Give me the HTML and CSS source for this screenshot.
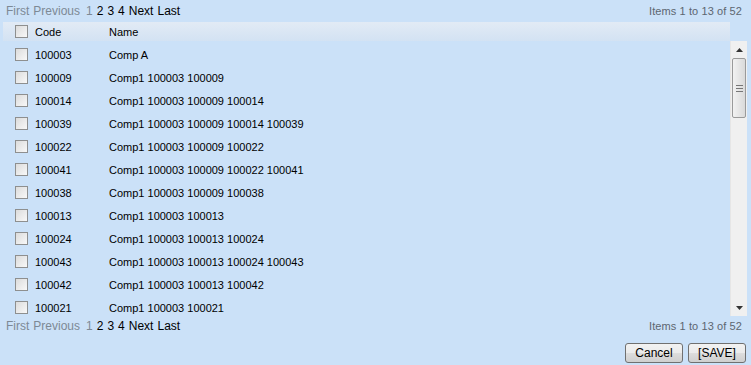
FILE: index.html
```html
<!DOCTYPE html>
<html>
<head>
    <link rel="stylesheet" href="styles.css">
</head>
<body>
    <div class="panel">
        <div class="pager">
            <div class="pager-links">
                <span class="off">First</span>
                <span class="off">Previous</span>
                <span class="off first-num">1</span>
                <a href="#">2</a>
                <a href="#">3</a>
                <a href="#">4</a>
                <a href="#">Next</a>
                <a href="#">Last</a>
            </div>
            <div class="pager-info">Items 1 to 13 of 52</div>
        </div>

        <div class="grid">
            <div class="grid-head">
                <span class="cell-check"><span class="box"></span></span>
                <span class="cell-code">Code</span>
                <span class="cell-name">Name</span>
            </div>
            <div class="grid-body">
                <div class="rows">
                    <div class="row"><span class="cell-check"><span class="box"></span></span><span class="cell-code">100003</span><span class="cell-name">Comp A</span></div>
                    <div class="row"><span class="cell-check"><span class="box"></span></span><span class="cell-code">100009</span><span class="cell-name">Comp1 100003 100009</span></div>
                    <div class="row"><span class="cell-check"><span class="box"></span></span><span class="cell-code">100014</span><span class="cell-name">Comp1 100003 100009 100014</span></div>
                    <div class="row"><span class="cell-check"><span class="box"></span></span><span class="cell-code">100039</span><span class="cell-name">Comp1 100003 100009 100014 100039</span></div>
                    <div class="row"><span class="cell-check"><span class="box"></span></span><span class="cell-code">100022</span><span class="cell-name">Comp1 100003 100009 100022</span></div>
                    <div class="row"><span class="cell-check"><span class="box"></span></span><span class="cell-code">100041</span><span class="cell-name">Comp1 100003 100009 100022 100041</span></div>
                    <div class="row"><span class="cell-check"><span class="box"></span></span><span class="cell-code">100038</span><span class="cell-name">Comp1 100003 100009 100038</span></div>
                    <div class="row"><span class="cell-check"><span class="box"></span></span><span class="cell-code">100013</span><span class="cell-name">Comp1 100003 100013</span></div>
                    <div class="row"><span class="cell-check"><span class="box"></span></span><span class="cell-code">100024</span><span class="cell-name">Comp1 100003 100013 100024</span></div>
                    <div class="row"><span class="cell-check"><span class="box"></span></span><span class="cell-code">100043</span><span class="cell-name">Comp1 100003 100013 100024 100043</span></div>
                    <div class="row"><span class="cell-check"><span class="box"></span></span><span class="cell-code">100042</span><span class="cell-name">Comp1 100003 100013 100042</span></div>
                    <div class="row"><span class="cell-check"><span class="box"></span></span><span class="cell-code">100021</span><span class="cell-name">Comp1 100003 100021</span></div>
                </div>
                <div class="scrollbar">
                    <div class="arrow">
                        <svg width="7" height="4" viewBox="0 0 7 4"><path d="M3.5 0 L7 4 L0 4 Z" fill="#333"/></svg>
                    </div>
                    <div class="thumb">
                        <svg width="7" height="7" viewBox="0 0 7 7"><path d="M0 0.5 H7 M0 3.5 H7 M0 6.5 H7" stroke="#777" stroke-width="1"/></svg>
                    </div>
                    <div class="track"></div>
                    <div class="arrow">
                        <svg width="7" height="4" viewBox="0 0 7 4"><path d="M0 0 L7 0 L3.5 4 Z" fill="#333"/></svg>
                    </div>
                </div>
            </div>
        </div>

        <div class="pager pager-bottom">
            <div class="pager-links">
                <span class="off">First</span>
                <span class="off">Previous</span>
                <span class="off first-num">1</span>
                <a href="#">2</a>
                <a href="#">3</a>
                <a href="#">4</a>
                <a href="#">Next</a>
                <a href="#">Last</a>
            </div>
            <div class="pager-info">Items 1 to 13 of 52</div>
        </div>

        <div class="actions">
            <button class="btn">Cancel</button>
            <button class="btn">[SAVE]</button>
        </div>
    </div>
</body>
</html>
```

FILE: styles.css
```css
/* General Styles */
body {
    margin: 0;
    padding: 0;
    background-color: #cbe1f8;
    font-family: 'Liberation Sans', Arial, sans-serif;
    font-size: 11px;
    color: #000;
}

.panel {
    width: 751px;
    height: 365px;
    box-sizing: border-box;
    padding: 0 4px 0 3px;
}

/* Pager */
.pager {
    display: flex;
    justify-content: space-between;
    align-items: center;
    height: 22px;
    padding: 0 5px 0 3px;
    font-size: 12px;
}

.pager-links {
    display: flex;
    gap: 4px;
}

.pager-links .first-num {
    margin-left: 2px;
}

.pager-links a {
    color: #000;
    text-decoration: none;
}

.pager-links .off {
    color: #7d8995;
}

.pager-info {
    color: #5d6670;
    font-size: 11px;
    letter-spacing: 0.1px;
}

.pager-bottom {
    height: 20px;
}

/* Grid */
.grid-head {
    display: flex;
    align-items: center;
    height: 19px;
    width: 727px;
    background: linear-gradient(#e2ebf5, #d3e2f3);
}

.grid-body {
    display: flex;
    height: 275px;
}

.rows {
    width: 727px;
    height: 275px;
    padding-top: 2px;
    box-sizing: border-box;
    overflow: hidden;
}

.row {
    display: flex;
    align-items: center;
    height: 23px;
}

.cell-check {
    width: 32px;
    padding-left: 12px;
    box-sizing: border-box;
    display: flex;
}

.cell-code {
    width: 74px;
}

.box {
    width: 11px;
    height: 11px;
    border: 1px solid #8e8f8f;
    background: linear-gradient(135deg, #dcdcdc, #f8f8f8);
}

/* Scrollbar */
.scrollbar {
    width: 16px;
    height: 275px;
    margin-left: 1px;
    display: flex;
    flex-direction: column;
    background-color: #f0f0f0;
    border-left: 1px solid #e6e6e6;
}

.arrow {
    height: 17px;
    display: flex;
    align-items: center;
    justify-content: center;
}

.thumb {
    height: 58px;
    margin: 0 1px;
    border: 1px solid #9a9a9a;
    border-radius: 2px;
    background: linear-gradient(90deg, #f2f2f2, #dadada);
    display: flex;
    align-items: center;
    justify-content: center;
}

.track {
    flex: 1;
}

/* Buttons */
.actions {
    display: flex;
    justify-content: flex-end;
    gap: 5px;
    padding-top: 7px;
    padding-right: 1px;
}

.btn {
    width: 58px;
    height: 20px;
    font-family: 'Liberation Sans', Arial, sans-serif;
    font-size: 12px;
    color: #000;
    border: 1px solid #707070;
    border-radius: 3px;
    background: linear-gradient(#f2f2f2 0%, #ebebeb 50%, #dddddd 51%, #cfcfcf 100%);
    padding: 0;
}
```
